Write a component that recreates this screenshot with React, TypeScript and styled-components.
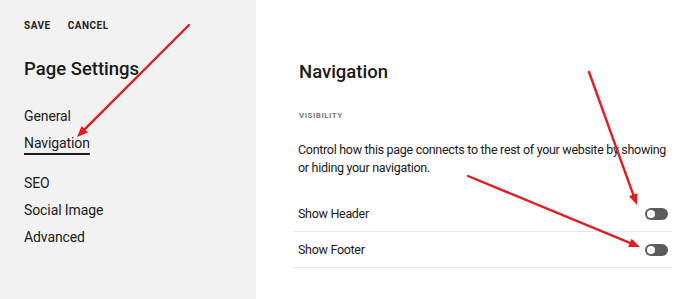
import React from 'react'
import styled, { createGlobalStyle } from 'styled-components'

const GlobalStyle = createGlobalStyle`
  html, body {
    margin: 0;
    padding: 0;
    background: #ffffff;
  }
  body {
    font-family: Roboto, 'Liberation Sans', Arial, sans-serif;
    color: #1a1a1a;
    -webkit-font-smoothing: antialiased;
  }
`

const Page = styled.div`
  position: relative;
  display: flex;
  width: 700px;
  height: 299px;
  overflow: hidden;
`

const Sidebar = styled.aside`
  width: 256px;
  flex-shrink: 0;
  box-sizing: border-box;
  padding: 20px 24px 0 24px;
  background-color: #f2f2f2;
`

const Actions = styled.div`
  display: flex;
  gap: 17px;
`

const ActionButton = styled.span`
  font-size: 10px;
  line-height: 12px;
  font-weight: 700;
  letter-spacing: 0.5px;
  color: #222222;
`

const SidebarTitle = styled.h1`
  margin: 26px 0 0 0;
  font-size: 18.5px;
  line-height: 22px;
  font-weight: 500;
  color: #1a1a1a;
`

const NavGroup = styled.ul<{ $gap: number }>`
  list-style: none;
  margin: ${({ $gap }) => $gap}px 0 0 0;
  padding: 0;
`

const NavItem = styled.li<{ $active?: boolean }>`
  font-size: 14px;
  line-height: 27px;
  letter-spacing: -0.1px;
  color: #1a1a1a;
  text-decoration: ${({ $active }) => ($active ? 'underline' : 'none')};
  text-decoration-thickness: 1.5px;
  text-underline-offset: 5px;
`

const Main = styled.main`
  flex: 1;
  padding: 61px 0 0 38px;
`

const Content = styled.div`
  width: 378px;
`

const Heading = styled.h2`
  margin: 0;
  padding-left: 5px;
  font-size: 18.5px;
  line-height: 22px;
  font-weight: 500;
  color: #1a1a1a;
`

const SectionLabel = styled.div`
  margin-top: 28px;
  padding-left: 5px;
  font-size: 8px;
  line-height: 10px;
  font-weight: 700;
  letter-spacing: 0.5px;
  color: #7a7a7a;
`

const Description = styled.p`
  margin: 20px 0 0 0;
  padding-left: 4px;
  font-size: 12.5px;
  line-height: 18px;
  letter-spacing: -0.3px;
  color: #1a1a1a;
`

const Rows = styled.div`
  margin-top: 19px;
`

const Row = styled.div`
  display: flex;
  align-items: center;
  justify-content: space-between;
  height: 35px;
  padding: 0 4px;
  border-bottom: 1px solid #e6e6e6;
`

const RowLabel = styled.span`
  font-size: 12.5px;
  line-height: 18px;
  letter-spacing: -0.3px;
  color: #1a1a1a;
`

const Toggle = styled.span<{ $on?: boolean }>`
  position: relative;
  display: inline-block;
  width: 23px;
  height: 12px;
  border-radius: 6px;
  background-color: ${({ $on }) => ($on ? '#1a1a1a' : '#5c5c5c')};

  &::after {
    content: '';
    position: absolute;
    top: 2px;
    left: ${({ $on }) => ($on ? '13px' : '2px')};
    width: 8px;
    height: 8px;
    border-radius: 50%;
    background-color: #ffffff;
  }
`

const Overlay = styled.svg`
  position: absolute;
  top: 0;
  left: 0;
  width: 700px;
  height: 299px;
  pointer-events: none;
`

interface ArrowProps {
  x1: number
  y1: number
  x2: number
  y2: number
}

const Arrow = ({ x1, y1, x2, y2 }: ArrowProps) => {
  const angle = Math.atan2(y2 - y1, x2 - x1)
  const len = 11
  const half = 4.5
  const bx = x2 - Math.cos(angle) * len
  const by = y2 - Math.sin(angle) * len
  const px = -Math.sin(angle) * half
  const py = Math.cos(angle) * half
  const head = `${x2},${y2} ${bx + px},${by + py} ${bx - px},${by - py}`
  return (
    <g>
      <line x1={x1} y1={y1} x2={bx + Math.cos(angle) * 2} y2={by + Math.sin(angle) * 2} stroke="#e31b23" strokeWidth={2.4} strokeLinecap="round" />
      <polygon points={head} fill="#e31b23" />
    </g>
  )
}

const sections = [
  { label: 'Show Header' },
  { label: 'Show Footer' },
]

const App = () => (
  <>
    <GlobalStyle />
    <Page>
      <Sidebar>
        <Actions>
          <ActionButton>SAVE</ActionButton>
          <ActionButton>CANCEL</ActionButton>
        </Actions>
        <SidebarTitle>Page Settings</SidebarTitle>
        <NavGroup $gap={23}>
          <NavItem>General</NavItem>
          <NavItem $active>Navigation</NavItem>
        </NavGroup>
        <NavGroup $gap={13}>
          <NavItem>SEO</NavItem>
          <NavItem>Social Image</NavItem>
          <NavItem>Advanced</NavItem>
        </NavGroup>
      </Sidebar>

      <Main>
        <Content>
          <Heading>Navigation</Heading>
          <SectionLabel>VISIBILITY</SectionLabel>
          <Description>
            Control how this page connects to the rest of your website by showing or hiding your navigation.
          </Description>
          <Rows>
            {sections.map((s) => (
              <Row key={s.label}>
                <RowLabel>{s.label}</RowLabel>
                <Toggle />
              </Row>
            ))}
          </Rows>
        </Content>
      </Main>

      <Overlay viewBox="0 0 700 299">
        <Arrow x1={189} y1={25} x2={77} y2={137} />
        <Arrow x1={589} y1={72} x2={637} y2={205} />
        <Arrow x1={468} y1={176} x2={640} y2={247} />
      </Overlay>
    </Page>
  </>
)

export default App
